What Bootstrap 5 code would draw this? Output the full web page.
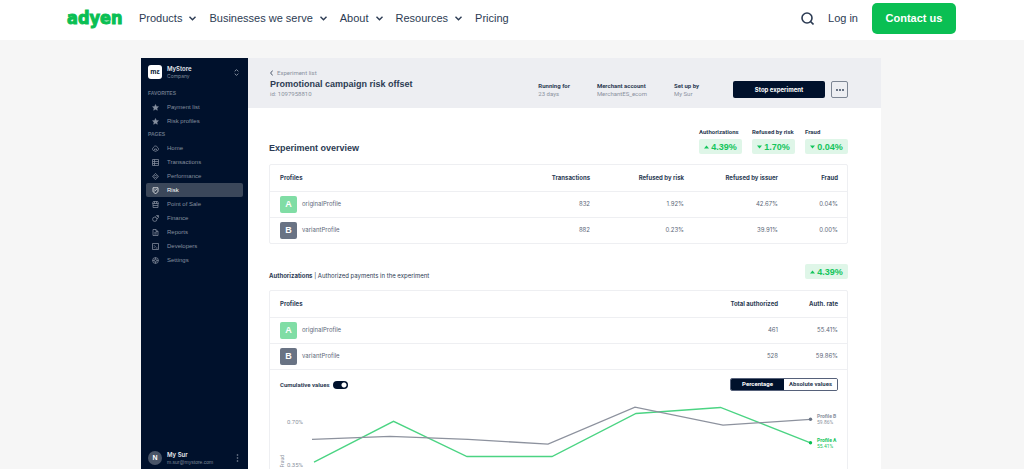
<!DOCTYPE html>
<html lang="en">
<head>
<meta charset="utf-8">
<meta name="viewport" content="width=device-width, initial-scale=1">
<title>Adyen</title>
<link href="https://cdn.jsdelivr.net/npm/bootstrap@5.3.0/dist/css/bootstrap.min.css" rel="stylesheet">
<style>
:root{--navy:#00112c;--ink:#2c3b53;--muted:#8b929e;--green:#0abf53;--line:#eeeff2;--head:"Liberation Sans",Arial,sans-serif}
body{font-family:var(--head);background:#f6f6f6;color:var(--ink);font-size:7px;line-height:8px}
a{color:inherit;text-decoration:none}
button{font-family:inherit}
svg{display:block;flex:none}
.page{height:100vh}
.topbar{height:40px;padding:0 68px 4px 67px;font-size:11px;line-height:16px}
.topbar .plain{border:0;background:none;padding:0;color:inherit}
.topbar nav{gap:13px}
.topbar .actions{gap:14px}
.chev{gap:7px}
.wordmark{font:bold 18px/20px "DejaVu Sans Condensed","DejaVu Sans",sans-serif;color:var(--green);width:72px;-webkit-text-stroke:1px var(--green)}
.contact{background:var(--green);color:#fff;font-weight:bold;font-size:11px;width:84px;height:31px;border:0;border-radius:5px}
.stage{padding:18px 143px 0 141px;min-height:0}
.side{width:107px;background:var(--navy);color:#858f9f;font-size:6px;padding:0 5px 2px}
.side .who{height:29px;padding:0 4px 1px 2px}
.side .who strong,.side .me strong{display:block;color:#e8ebef;font-family:Inter,sans-serif;font-weight:600;font-size:6px;line-height:8px}
.side .sub{display:block;color:#7d8899;font-size:5px;line-height:7px}
.side .who .sub{font-family:Inter,sans-serif}
.shop{width:14px;height:14px;border-radius:3px;background:#fff;color:var(--navy);font-size:7px;font-weight:bold}
.group{font-size:5px;line-height:13px;font-weight:bold;padding-left:2px;color:#667386;margin:0}
.item{height:14px;padding-left:6px;gap:8px;border-radius:2px}
.item.on{background:#3b475a;color:#fff}
.item svg{width:7px;height:7px;fill:none;stroke:currentColor}
.me{height:18px;padding:0 4px 0 2px}
.avatar{width:14px;height:14px;border-radius:50%;background:#495568;color:#fff;font-weight:bold;font-size:7px}
.gap5{gap:5px}
.board{min-width:0;font-family:Inter,sans-serif;font-size:6px}
.head{height:50px;background:#edeef2;padding:10px 33px 0 22px}
.head h1,.overview h2{font-family:var(--head);font-size:9px;line-height:12px;font-weight:bold;margin:0}
.crumb,.ident{font-family:Roboto,sans-serif;font-size:6px;color:var(--muted)}
.crumb{line-height:10px}
.facts{margin:14px 34px 0 0;gap:27px;font-family:Roboto,sans-serif;font-size:6px;line-height:8px}
.facts dt{font-weight:bold}
.facts dd{margin:0;color:var(--muted)}
.stop{margin-top:13px;width:92px;height:17px;background:var(--navy);color:#fff;border:0;border-radius:2px;font-weight:bold;font-size:6px;padding:0}
.more{margin:13px 0 0 6px;width:17px;height:17px;border:1px solid #7d8694;border-radius:2px;background:none;padding:0;color:var(--ink)}
.body-pad{padding:20px 33px 0 21px}
.overview{height:36px;padding-bottom:10px}
.stats{gap:10px}
.stat{width:43px;white-space:nowrap}
.stat b{display:block;font-family:Roboto,sans-serif;font-size:6px;line-height:8px;height:11px}
.pill{width:43px;height:15px;border-radius:2px;background:#dff6e8;color:#14c55c;font-family:var(--head);font-size:9px;font-weight:bold;gap:2px}
.pill svg{width:5px;height:4px;fill:currentColor}
.panel{border:1px solid var(--line);border-radius:2px}
.grid{width:100%;table-layout:fixed}
.grid th,.grid td{height:26px;padding:0;text-align:right;vertical-align:middle;border-bottom:1px solid var(--line);line-height:8px}
.grid th:first-child,.grid td:first-child{text-align:left;padding-left:10px}
.grid th:last-child,.grid td:last-child{padding-right:9px}
.panel.shut tr:last-child td{border-bottom:0}
.grid td{color:#5c6779}
.wide{width:94px}.slim{width:69px}
.tag{width:17px;height:17px;border-radius:2px;color:#fff;font-family:var(--head);font-size:9px;font-weight:bold;background:#697384}
.tag.a{background:#80dda5}
.auth{height:46px;padding-top:20px}
.tools{height:34px;padding:8px 9px 0 10px}
.tools label{font-family:Roboto,sans-serif;font-weight:bold;font-size:6px;line-height:14px}
.tools .toggle{appearance:none;width:15px;height:8px;border-radius:4px;background:radial-gradient(circle at 11px 4px,#fff 2px,var(--navy) 3px);margin:3px 0 0 4px}
.seg{width:108px;height:13px;border:1px solid #56617a;border-radius:2px;overflow:hidden;font-family:Roboto,sans-serif}
.seg button{border:0;background:#fff;color:var(--ink);font-size:6px;font-weight:bold;padding:0;flex:1 1 0;line-height:10px}
.seg button.sel{background:var(--navy);color:#fff}
.chart{height:66px;font-family:Roboto,sans-serif;font-size:6px;line-height:7px;color:var(--muted)}
.plot{min-width:0}
.axis{width:40px;padding:14px 7px 0 0;text-align:right}
.axis p{margin:0 0 36px}
.axis span{position:absolute;left:9px;top:51px;font-size:5px;writing-mode:vertical-rl;transform:rotate(180deg)}
.ends{width:33px;padding:9px 0 0 3px;font-size:5px;line-height:6px;white-space:nowrap}
.ends b{display:block}
.ends div{margin-bottom:12px}
.ends .ga{color:#14c55c}
</style>
</head>
<body>
<div class="page d-flex flex-column overflow-hidden">
<header class="topbar bg-white d-flex align-items-center flex-shrink-0">
  <a href="#" class="wordmark">adyen</a>
  <nav class="d-flex align-items-center" aria-label="Main">
    <button class="plain d-flex align-items-center chev">Products<svg width="7" height="5" viewBox="0 0 7 5" fill="none" stroke="currentColor" stroke-width="1.4"><path d="M.5.7l3 3 3-3"/></svg></button>
    <button class="plain d-flex align-items-center chev">Businesses we serve<svg width="7" height="5" viewBox="0 0 7 5" fill="none" stroke="currentColor" stroke-width="1.4"><path d="M.5.7l3 3 3-3"/></svg></button>
    <button class="plain d-flex align-items-center chev">About<svg width="7" height="5" viewBox="0 0 7 5" fill="none" stroke="currentColor" stroke-width="1.4"><path d="M.5.7l3 3 3-3"/></svg></button>
    <button class="plain d-flex align-items-center chev">Resources<svg width="7" height="5" viewBox="0 0 7 5" fill="none" stroke="currentColor" stroke-width="1.4"><path d="M.5.7l3 3 3-3"/></svg></button>
    <a href="#">Pricing</a>
  </nav>
  <div class="actions d-flex align-items-center ms-auto">
    <button class="plain" aria-label="Search"><svg width="13" height="13" viewBox="0 0 13 13" fill="none" stroke="currentColor" stroke-width="1.6"><circle cx="6" cy="6" r="5"/><path d="M9.5 9.5l3 3"/></svg></button>
    <a href="#">Log in</a>
    <button class="contact p-0">Contact us</button>
  </div>
</header>

<main class="stage flex-grow-1 d-flex">
  <aside class="side d-flex flex-column flex-shrink-0">
    <div class="who d-flex align-items-center gap5">
      <span class="shop d-flex align-items-center justify-content-center">mε</span>
      <div><strong>MyStore</strong><span class="sub">Company</span></div>
      <svg class="ms-auto" width="5" height="7" viewBox="0 0 5 7" fill="none" stroke="currentColor"><path d="M.7 2.4L2.5.6l1.8 1.8M.7 4.6l1.8 1.8 1.8-1.8"/></svg>
    </div>
    <p class="group">FAVORITES</p>
    <a href="#" class="item d-flex align-items-center"><svg viewBox="0 0 14 14"><path fill="currentColor" d="M7 1l1.8 3.9 4.2.5-3.1 2.9.8 4.2L7 10.4l-3.7 2.1.8-4.2L1 5.4l4.2-.5z"/></svg>Payment list</a>
    <a href="#" class="item d-flex align-items-center"><svg viewBox="0 0 14 14"><path fill="currentColor" d="M7 1l1.8 3.9 4.2.5-3.1 2.9.8 4.2L7 10.4l-3.7 2.1.8-4.2L1 5.4l4.2-.5z"/></svg>Risk profiles</a>
    <p class="group">PAGES</p>
    <a href="#" class="item d-flex align-items-center"><svg viewBox="0 0 14 14" stroke-width="1.5"><path d="M4 11H2.5C0 9 1 5.5 3 5c1-4 7-4 8 0 2 .5 3 4 .5 6H10M5 11V8h4v3M5 12.5h4"/></svg>Home</a>
    <a href="#" class="item d-flex align-items-center"><svg viewBox="0 0 14 14" stroke-width="1.5"><path d="M1 1h12v12H1zM1 5h12M1 9h12M5 1v12"/></svg>Transactions</a>
    <a href="#" class="item d-flex align-items-center"><svg viewBox="0 0 14 14" stroke-width="1.5"><path d="M7 .8L13.2 7 7 13.2.8 7zM7 4l3 3-3 3-3-3z"/></svg>Performance</a>
    <a href="#" class="item on d-flex align-items-center" aria-current="page"><svg viewBox="0 0 14 14" stroke-width="1.5"><path d="M2 1.5h10V8c0 2.5-2.5 4-5 5-2.5-1-5-2.5-5-5zM4.5 9L9.5 4M4.5 5v1.5"/></svg>Risk</a>
    <a href="#" class="item d-flex align-items-center"><svg viewBox="0 0 14 14" stroke-width="1.5"><path d="M2.5 1h9L13 5H1zM2 5v8h10V5M5 1v4M9 1v4M2 9h10"/></svg>Point of Sale</a>
    <a href="#" class="item d-flex align-items-center"><svg viewBox="0 0 14 14" stroke-width="1.5"><circle cx="5.5" cy="8.5" r="4.3"/><path d="M7 3l2-2 4 4-3 3M10 1h3v3"/></svg>Finance</a>
    <a href="#" class="item d-flex align-items-center"><svg viewBox="0 0 14 14" stroke-width="1.5"><path d="M2 1h6l4 4v8H2zM8 1v4h4M4.5 7.5h5M4.5 10h5"/></svg>Reports</a>
    <a href="#" class="item d-flex align-items-center"><svg viewBox="0 0 14 14" stroke-width="1.5"><path d="M1 1h12v12H1zM4 4.5L6.5 7 4 9.5M7.5 10H11"/></svg>Developers</a>
    <a href="#" class="item d-flex align-items-center"><svg viewBox="0 0 14 14" stroke-width="1.5"><circle cx="7" cy="7" r="5.8"/><circle cx="7" cy="7" r="2.3"/><path d="M7 1v3.5M7 9.5V13M1 7h3.5M9.5 7H13"/></svg>Settings</a>
    <div class="me mt-auto d-flex align-items-center gap5">
      <span class="avatar d-flex align-items-center justify-content-center">N</span>
      <div><strong>My Sur</strong><span class="sub">m.sur@mystore.com</span></div>
      <svg class="ms-auto" width="3" height="8" viewBox="0 0 3 8" fill="currentColor"><circle cx="1.5" cy="1" r=".8"/><circle cx="1.5" cy="4" r=".8"/><circle cx="1.5" cy="7" r=".8"/></svg>
    </div>
  </aside>

  <section class="board bg-white flex-grow-1">
    <div class="head d-flex align-items-start">
      <div class="me-auto">
        <a href="#" class="crumb d-flex align-items-center gap-1"><svg width="3" height="6" viewBox="0 0 3 6" fill="none" stroke="#4a566a"><path d="M2.7.5L.6 3l2.1 2.5"/></svg>Experiment list</a>
        <h1>Promotional campaign risk offset</h1>
        <div class="ident">id: 1097958810</div>
      </div>
      <dl class="facts d-flex">
        <div><dt>Running for</dt><dd>23 days</dd></div>
        <div><dt>Merchant account</dt><dd>MerchantES_ecom</dd></div>
        <div><dt>Set up by</dt><dd>My Sur</dd></div>
      </dl>
      <button class="stop">Stop experiment</button>
      <button class="more d-flex align-items-center justify-content-center" aria-label="More"><svg width="8" height="2" viewBox="0 0 8 2" fill="currentColor"><circle cx="1" cy="1" r=".9"/><circle cx="4" cy="1" r=".9"/><circle cx="7" cy="1" r=".9"/></svg></button>
    </div>

    <div class="body-pad">
      <div class="overview d-flex justify-content-between align-items-end">
        <h2>Experiment overview</h2>
        <div class="stats d-flex">
          <div class="stat"><b>Authorizations</b><span class="pill d-flex align-items-center justify-content-center"><svg viewBox="0 0 5 4"><path d="M0 3.5L2.5.5 5 3.5z"/></svg>4.39%</span></div>
          <div class="stat"><b>Refused by risk</b><span class="pill d-flex align-items-center justify-content-center"><svg viewBox="0 0 5 4"><path d="M0 .5L2.5 3.5 5 .5z"/></svg>1.70%</span></div>
          <div class="stat"><b>Fraud</b><span class="pill d-flex align-items-center justify-content-center"><svg viewBox="0 0 5 4"><path d="M0 .5L2.5 3.5 5 .5z"/></svg>0.04%</span></div>
        </div>
      </div>
      <div class="panel shut">
        <table class="grid">
          <thead><tr><th>Profiles</th><th class="wide">Transactions</th><th class="wide">Refused by risk</th><th class="wide">Refused by issuer</th><th class="slim">Fraud</th></tr></thead>
          <tbody>
            <tr><td><span class="d-flex align-items-center gap5"><span class="tag a d-flex align-items-center justify-content-center">A</span>originalProfile</span></td><td>832</td><td>1.92%</td><td>42.67%</td><td>0.04%</td></tr>
            <tr><td><span class="d-flex align-items-center gap5"><span class="tag d-flex align-items-center justify-content-center">B</span>variantProfile</span></td><td>882</td><td>0.23%</td><td>39.91%</td><td>0.00%</td></tr>
          </tbody>
        </table>
      </div>

      <div class="auth d-flex justify-content-between align-items-start">
        <div class="pt-2"><b>Authorizations</b> | Authorized payments in the experiment</div>
        <span class="pill d-flex align-items-center justify-content-center"><svg viewBox="0 0 5 4"><path d="M0 3.5L2.5.5 5 3.5z"/></svg>4.39%</span>
      </div>
      <div class="panel">
        <table class="grid">
          <thead><tr><th>Profiles</th><th class="wide">Total authorized</th><th class="slim">Auth. rate</th></tr></thead>
          <tbody>
            <tr><td><span class="d-flex align-items-center gap5"><span class="tag a d-flex align-items-center justify-content-center">A</span>originalProfile</span></td><td>461</td><td>55.41%</td></tr>
            <tr><td><span class="d-flex align-items-center gap5"><span class="tag d-flex align-items-center justify-content-center">B</span>variantProfile</span></td><td>528</td><td>59.86%</td></tr>
          </tbody>
        </table>
        <div class="tools d-flex align-items-start">
          <label for="cumulative">Cumulative values</label><input id="cumulative" class="toggle" type="checkbox" role="switch" checked>
          <div class="seg d-flex ms-auto"><button class="sel">Percentage</button><button>Absolute values</button></div>
        </div>
        <div class="chart d-flex">
          <div class="axis position-relative flex-shrink-0"><p>0.70%</p><p>0.35%</p><span>Fraud</span></div>
          <svg class="plot flex-fill" height="66" viewBox="310 404 504 66" preserveAspectRatio="none" fill="none" stroke-width="1.3">
            <path stroke="#4bd483" d="M314 462.2L393.5 421.3 467 456.5H552L636 413.5 720.5 407.5 810.5 442.8"/>
            <path stroke="#8d929e" d="M312 439.3L390 436.3 468 439.3 548 444.2 635 407.2 723 425.2 810.5 419.3"/>
            <circle cx="810.5" cy="442.8" r="1.7" fill="#0abf53"/><circle cx="810.5" cy="419.3" r="1.7" fill="#697384"/>
          </svg>
          <div class="ends flex-shrink-0"><div><b>Profile B</b>59.86%</div><div class="ga"><b>Profile A</b>55.41%</div></div>
        </div>
      </div>
    </div>
  </section>
</main>
</div>
<script src="https://cdn.jsdelivr.net/npm/bootstrap@5.3.0/dist/js/bootstrap.bundle.min.js"></script>
</body>
</html>
